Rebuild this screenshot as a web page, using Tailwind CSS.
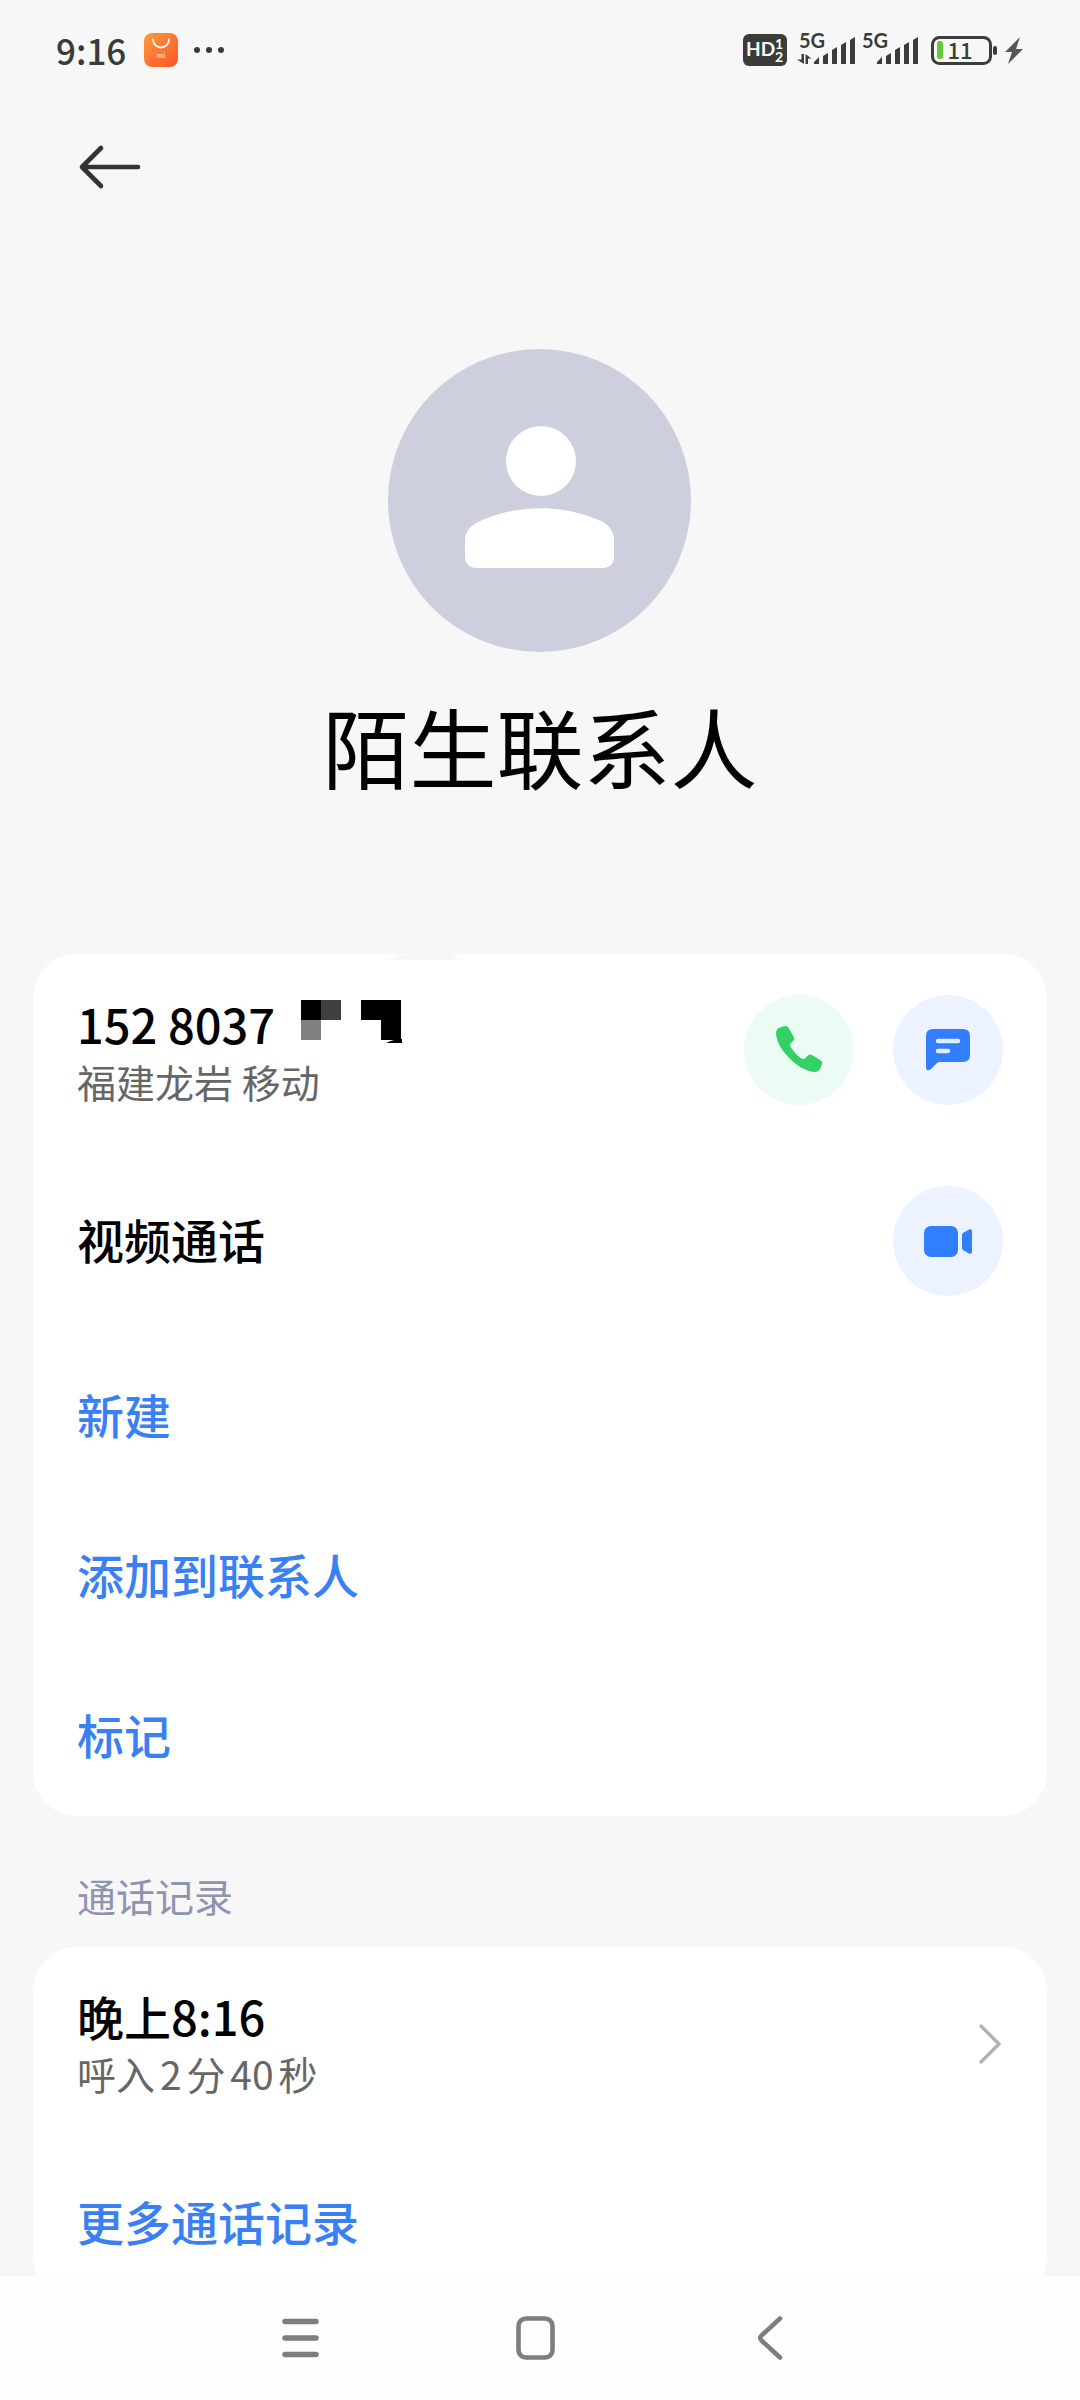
<!DOCTYPE html>
<html lang="zh-CN">
  <head>
    <meta charset="UTF-8" />
    <meta name="viewport" content="width=device-width, initial-scale=1.0" />
    <title>陌生联系人</title>
    <script src="https://cdn.jsdelivr.net/npm/@tailwindcss/browser@4"></script>
  </head>
  <body class="bg-[#f7f7f7] font-['Noto_Sans_CJK_SC',sans-serif] text-black">
    <div class="flex h-screen flex-col overflow-hidden">
      <!-- 状态栏 -->
      <div class="flex h-[100px] shrink-0 items-center justify-between pr-[57px] pl-[56px]">
        <div class="flex items-center">
          <span class="text-[35px] leading-[52px] font-medium text-[#3a3a3a]">9:16</span>
          <svg class="ml-[18px] size-[34px]" viewBox="0 0 34 34">
            <defs>
              <linearGradient id="shop" x1="0" y1="0" x2="1" y2="1">
                <stop offset="0" stop-color="#ff9a3c" />
                <stop offset="1" stop-color="#fd5328" />
              </linearGradient>
            </defs>
            <rect width="34" height="34" rx="8" fill="url(#shop)" />
            <path d="M9 6.5a8 8 0 0 0 16 0" fill="none" stroke="#fff" stroke-width="1.8" stroke-linecap="round" />
            <text x="17" y="25" text-anchor="middle" font-size="7" font-weight="700" fill="#ffd0bd">mi</text>
          </svg>
          <svg class="ml-4 h-[10px] w-[30px]" viewBox="0 0 30 10" fill="#3a3a3a">
            <circle cx="3" cy="5" r="3" />
            <circle cx="15" cy="5" r="3" />
            <circle cx="27" cy="5" r="3" />
          </svg>
        </div>
        <div class="flex items-center font-['Lato','Liberation_Sans',sans-serif]">
          <svg class="h-8 w-11" viewBox="0 0 44 32">
            <rect width="44" height="32" rx="6" fill="#3a3c3a" />
            <text x="3" y="22" font-size="19" font-weight="700" fill="#fff">HD</text>
            <text x="32" y="15" font-size="14" font-weight="700" fill="#fff">1</text>
            <text x="32" y="28" font-size="14" font-weight="700" fill="#fff">2</text>
          </svg>
          <svg class="ml-[10px] h-12 w-[60px]" viewBox="0 -8 60 48" fill="#3a3c3a">
            <text x="2" y="14" font-size="20" font-weight="700">5G</text>
            <path d="M4.500 20H7v10L0 25.500h4.500zM8.500 30V20l6 4.500H11V30z" />
            <path d="M17 30v-2l5-5v7zM26 30V22l5-3v11zM35 30V16l5-3v17zM44 30V11l5-3v22zM53 30V6l5-3v27z" />
          </svg>
          <svg class="ml-[3px] h-12 w-[60px]" viewBox="0 -8 60 48" fill="#3a3c3a">
            <text x="2" y="14" font-size="20" font-weight="700">5G</text>
            <path d="M17 30v-2l5-5v7zM26 30V22l5-3v11zM35 30V16l5-3v17zM44 30V11l5-3v22zM53 30V6l5-3v27z" />
          </svg>
          <svg class="ml-[11px] h-8 w-[67px]" viewBox="0 0 67 32">
            <rect x="1.5" y="3.5" width="58" height="26" rx="7" fill="none" stroke="#3a3c3a" stroke-width="3" />
            <rect x="6" y="7" width="6" height="18" rx="2.5" fill="#68c83a" />
            <rect x="62" y="12" width="4" height="9" rx="2" fill="#3a3c3a" />
            <text x="29" y="25" text-anchor="middle" font-size="22" font-weight="500" font-family="Noto Sans CJK SC" fill="#3a3c3a">11</text>
          </svg>
          <svg class="ml-[7px] h-8 w-[18px]" viewBox="0 0 18 32">
            <path d="M15 3 0 18h7L3 30 18 15h-7z" fill="#555" />
          </svg>
        </div>
      </div>

      <main class="min-h-0 flex-1 overflow-hidden">
        <header class="px-[76px] pt-[41px]">
          <button class="block cursor-pointer" aria-label="返回">
            <svg class="h-[52px] w-[68px]" viewBox="0 0 68 52" fill="none" stroke="#323433" stroke-width="4.6" stroke-linecap="round" stroke-linejoin="round">
              <path d="M25 7 6 26l19 19M6 26h56" />
            </svg>
          </button>
        </header>

        <section class="flex flex-col items-center pt-[156px]">
          <svg class="size-[304px]" viewBox="0 0 304 304">
            <circle cx="151.500" cy="151.500" r="151.500" fill="#cdcede" />
            <circle cx="153" cy="112" r="35" fill="#fff" />
            <path d="M77 191c0-8 5-14 13-18 40-18.500 86-18.500 125 0 7 4 11 11 11 18v17c0 7-5 11-11 11H89c-7 0-12-4-12-11z" fill="#fff" />
          </svg>
          <h1 class="mt-7 text-[87px] leading-[128px] font-normal">陌生联系人</h1>
        </section>

        <section class="relative mx-[33px] mt-[145px] rounded-[44px] bg-white">
          <svg class="absolute top-0 left-[356px] h-[6px] w-[70px]" viewBox="0 0 70 6">
            <path d="M0 6Q12 1 22 0H62Q66 2 70 6z" fill="#f7f7f7" />
          </svg>
          <div class="flex h-[192px] items-center px-11">
            <div class="flex-1">
              <div class="flex items-center">
                <span class="text-[47px] leading-[62px] font-medium">152 8037</span>
                <svg class="mb-1 ml-[26px] h-[44px] w-[102px]" viewBox="0 0 102 44">
                  <path d="M0 0h20v20H0zM60 0h40v40H80V20H60z" />
                  <path d="M20 0h20v20H20z" fill="#404040" />
                  <path d="M0 20h20v20H0z" fill="#808080" />
                  <path d="M85 43q8-4 16-4v4z" />
                </svg>
              </div>
              <p class="text-[39px] leading-[52px] text-[#666]">福建龙岩 移动</p>
            </div>
            <div class="flex gap-[39px]">
              <button class="flex size-[110px] cursor-pointer items-center justify-center rounded-full bg-[#edfbf5]" aria-label="拨打电话">
                <svg class="size-[48px]" viewBox="0 0 48 48">
                  <path d="M4 2 8 .5q4-1.500 6 2l5 9q1 2-1 3.500l-2 2q-1.500 1.500-.5 3.500 5 8.500 11 12 2 1 3.500 0l3-3q1.500-1.500 4-.5l8 5q3 1.500 2 4l-2 5q-1.500 3-5 3C25 46 2 24 1 8q0-5 3-6z" fill="#33d065" />
                </svg>
              </button>
              <button class="flex size-[110px] cursor-pointer items-center justify-center rounded-full bg-[#ecf2ff]" aria-label="发短信">
                <svg class="size-[44px]" viewBox="0 0 44 44">
                  <path d="M7 1h30q7 0 7 7v19q0 7-7 7H14q-2 0-3 1l-6 6q-2 2-4 1-1-.5-1-3V8q0-7 7-7z" fill="#317fff" />
                  <path d="M12 13h20M12 23h10" stroke="#dceeff" stroke-width="4.500" stroke-linecap="round" />
                </svg>
              </button>
            </div>
          </div>
          <div class="flex h-[190px] items-center justify-between px-11">
            <span class="pb-1 text-[47px] leading-[62px] font-medium">视频通话</span>
            <button class="flex size-[110px] cursor-pointer items-center justify-center rounded-full bg-[#ecf2ff]" aria-label="视频通话">
              <svg class="size-[48px]" viewBox="0 0 48 48" fill="#317fff">
                <rect y="9" width="34" height="31" rx="7" />
                <path d="m39 16 6-3.500q3-1 3 2v20q0 3-3 2L39 33q-1-1-1-2V18q0-1 1-2z" />
              </svg>
            </button>
          </div>
          <button class="block h-40 w-full cursor-pointer px-11 pb-1 text-left text-[47px] leading-[62px] font-medium text-[#3a80f5]">新建</button>
          <button class="block h-40 w-full cursor-pointer px-11 pb-1 text-left text-[47px] leading-[62px] font-medium text-[#3a80f5]">添加到联系人</button>
          <button class="block h-40 w-full cursor-pointer px-11 pb-1 text-left text-[47px] leading-[62px] font-medium text-[#3a80f5]">标记</button>
        </section>

        <h2 class="px-[77px] pt-[53px] pb-[26px] text-[39px] leading-[52px] text-[#8e93b0]">通话记录</h2>

        <section class="mx-[33px] rounded-[44px] bg-white">
          <button class="flex h-[194px] w-full cursor-pointer items-center justify-between px-11 text-left">
            <span class="flex flex-col pb-1">
              <span class="text-[47px] leading-[62px] font-medium">晚上8:16</span>
              <span class="text-[39px] leading-[52px] text-[#666] [text-autospace:normal]">呼入2分40秒</span>
            </span>
            <svg class="h-10 w-6" viewBox="0 0 24 40" fill="none" stroke="#b3b1b4" stroke-width="3.400" stroke-linecap="round" stroke-linejoin="round">
              <path d="m2 2 18 18L2 38" />
            </svg>
          </button>
          <button class="block h-40 w-full cursor-pointer px-11 text-left text-[47px] leading-[62px] font-medium text-[#3a80f5]">更多通话记录</button>
        </section>
      </main>

      <!-- 系统导航栏 -->
      <nav class="flex h-[124px] shrink-0 items-center justify-center gap-[187px] bg-[#fefefe] pr-[10px]">
        <button class="cursor-pointer" aria-label="最近任务">
          <svg class="size-12" viewBox="0 0 48 48" stroke="#7e7e7e" stroke-width="5.500" stroke-linecap="round">
            <path d="M9 7.500h31M9 24h31M9 40.500h31" />
          </svg>
        </button>
        <button class="cursor-pointer" aria-label="主屏幕">
          <svg class="size-12" viewBox="0 0 48 48" fill="none" stroke="#7e7e7e" stroke-width="4.600">
            <rect x="7.500" y="4.500" width="34" height="39" rx="7.500" />
          </svg>
        </button>
        <button class="cursor-pointer" aria-label="返回上一级">
          <svg class="size-12" viewBox="0 0 48 48" fill="none" stroke="#7e7e7e" stroke-width="4.600" stroke-linecap="round">
            <path d="M34 4.500 16 21q-3.500 3 0 6l18 16.500" />
          </svg>
        </button>
      </nav>
    </div>
  </body>
</html>
